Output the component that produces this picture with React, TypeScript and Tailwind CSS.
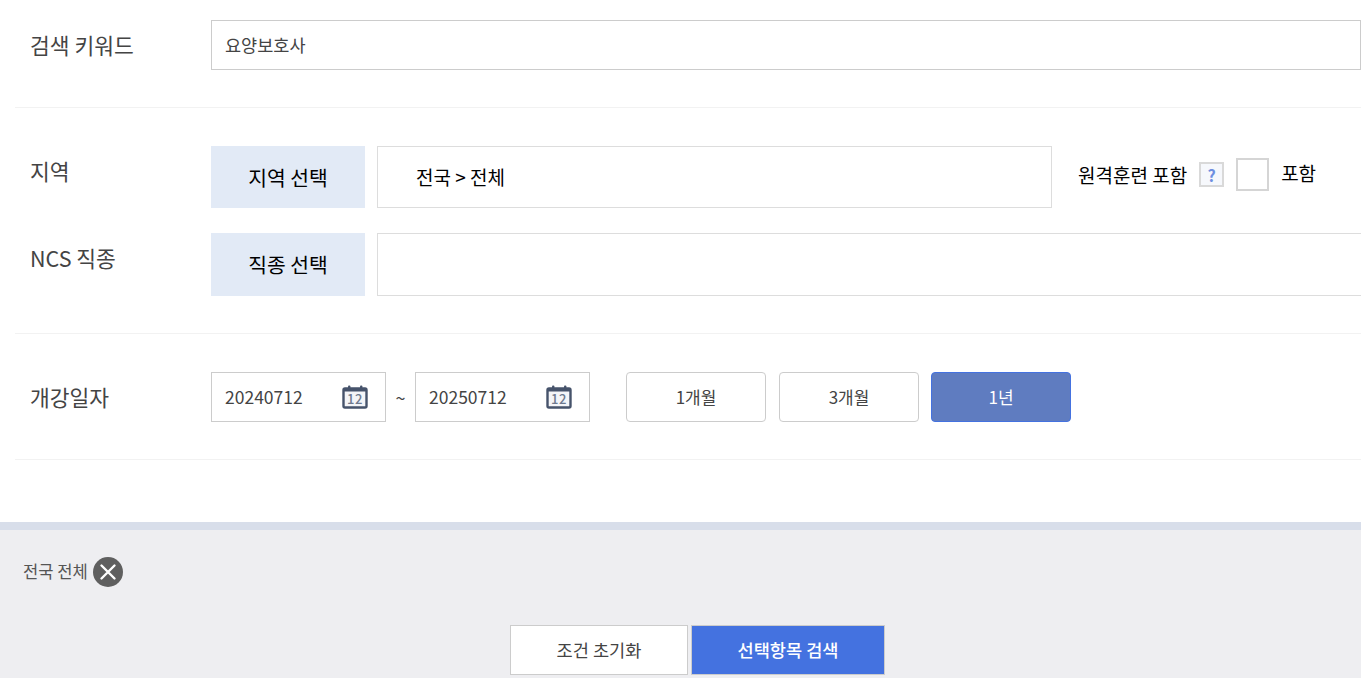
const FONT = "font-['Noto_Sans_CJK_KR',sans-serif]";

function CalendarIcon() {
  return (
    <svg width="26" height="24" viewBox="0 0 26 24" className="shrink-0">
      <rect x="1.5" y="3.5" width="23" height="19" rx="1.5" fill="#f4f5f8" stroke="#46536b" strokeWidth="2.4" />
      <rect x="1" y="3" width="24" height="3.5" fill="#46536b" />
      <rect x="6" y="0.5" width="2.4" height="4" rx="1" fill="#46536b" />
      <rect x="18" y="0.5" width="2.4" height="4" rx="1" fill="#46536b" />
      <text x="13" y="18.5" textAnchor="middle" fontSize="13" fontWeight="500" letterSpacing="0.5" fontFamily="'Noto Sans CJK KR',sans-serif" fill="#6f7a8f">12</text>
    </svg>
  );
}

function Label({ children, className = "" }: { children: React.ReactNode; className?: string }) {
  return <div className={`w-[196px] shrink-0 pl-[15px] text-[21.5px] leading-[30px] text-[#444] ${className}`}>{children}</div>;
}

function DateBox({ value }: { value: string }) {
  return (
    <div className="flex h-[50px] w-[175px] items-center justify-between border border-[#cccccc] pl-[13px] pr-[17px] text-[17.5px] text-[#444]">
      <span>{value}</span>
      <CalendarIcon />
    </div>
  );
}

function Pick({ children }: { children: React.ReactNode }) {
  return (
    <button className="flex h-full w-[154px] shrink-0 items-center justify-center bg-[#e2eaf6] text-[20.4px] text-black">
      {children}
    </button>
  );
}

function Period({ children, active = false }: { children: React.ReactNode; active?: boolean }) {
  return (
    <button
      className={`h-[50px] w-[140px] rounded-[4px] border text-[17px] ${
        active ? "border-[#4472e0] bg-[#5f7cc0] text-white" : "border-[#cccccc] bg-white text-[#444]"
      }`}
    >
      {children}
    </button>
  );
}

export default function App() {
  return (
    <div className={`${FONT} h-[678px] w-[1361px] overflow-hidden bg-white`}>
      <div className="pl-[15px]">
        <section className="flex h-[108px] items-start border-b border-[#f2f2f2] pt-[20px]">
          <Label className="mt-[10px]">검색 키워드</Label>
          <div className="flex h-[50px] flex-1 items-center border border-[#cccccc] pl-[13px] text-[17.5px] text-[#444]">요양보호사</div>
        </section>

        <section className="h-[226px] border-b border-[#f2f2f2] pt-[38px]">
          <div className="flex h-[62px] items-start">
            <Label className="mt-[10px]">지역</Label>
            <Pick>지역 선택</Pick>
            <div className="ml-[12px] flex h-full w-[675px] items-center border border-[#dddddd] pl-[38px] text-[19px] text-black">전국 &gt; 전체</div>
            <div className="ml-[26px] mt-[12px] flex items-center text-[19px] text-black">
              <span className="translate-y-[1px]">원격훈련 포함</span>
              <span className="ml-[12px] flex h-[25px] w-[25px] items-center justify-center border-2 border-[#d9d9d9] bg-[#f6f8fc] text-[16px] font-bold leading-none text-[#6f8fe0]">?</span>
              <span className="ml-[12px] h-[33px] w-[33px] border-2 border-[#d5d5d5] bg-white" />
              <span className="ml-[12px] -translate-y-[1px]">포함</span>
            </div>
          </div>
          <div className="mt-[25px] flex h-[63px] items-start">
            <Label className="mt-[10px]">NCS 직종</Label>
            <Pick>직종 선택</Pick>
            <div className="ml-[12px] h-full w-[1000px] shrink-0 border border-[#dddddd]" />
          </div>
        </section>

        <section className="flex h-[126px] items-start border-b border-[#f2f2f2] pt-[38px]">
          <Label className="mt-[10px]">개강일자</Label>
          <DateBox value="20240712" />
          <span className="flex h-[50px] w-[29px] items-center justify-center text-[18px] text-[#444]">~</span>
          <DateBox value="20250712" />
          <div className="ml-[36px] flex gap-[13px] [&>button:last-child]:-ml-px">
            <Period>1개월</Period>
            <Period>3개월</Period>
            <Period active>1년</Period>
          </div>
        </section>
      </div>

      <div className="mt-[62px] h-[156px] border-t-[8px] border-[#d8deea] bg-[#eeeef1]">
        <div className="flex h-[84px] items-center pl-[23px] pb-[1px] text-[16.6px] text-[#555]">
          <span>전국 전체</span>
          <span className="ml-[5px] flex h-[30px] w-[30px] items-center justify-center rounded-full bg-[#5f5f5f]">
            <svg width="18" height="18" viewBox="0 0 18 18">
              <path d="M2.5 2.5 15.5 15.5M15.5 2.5 2.5 15.5" stroke="#fff" strokeWidth="2.4" strokeLinecap="round" />
            </svg>
          </span>
        </div>
        <div className="mt-[11px] flex justify-center gap-[3px] pl-[34px]">
          <button className="h-[50px] w-[178px] border border-[#cccccc] bg-white text-[17.6px] text-[#444]">조건 초기화</button>
          <button className="h-[50px] w-[194px] border border-[#cccccc] bg-[#4472e0] text-[17.6px] font-medium text-white">선택항목 검색</button>
        </div>
      </div>
    </div>
  );
}
